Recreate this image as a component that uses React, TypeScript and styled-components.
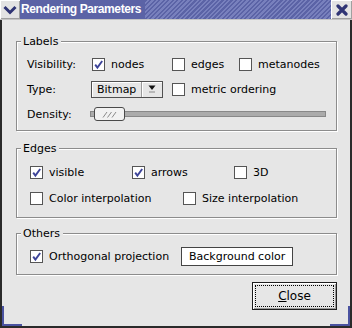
import React from 'react';
import styled, { createGlobalStyle } from 'styled-components';

const GlobalStyle = createGlobalStyle`
  html, body {
    margin: 0;
    padding: 0;
    background: #e6e6e6;
  }
  body {
    font-family: 'DejaVu Sans', 'Bitstream Vera Sans', sans-serif;
    font-size: 11px;
    color: #000;
  }
`;

const NAVY = '#2f3474';

const Check: React.FC<{ checked?: boolean; label: string; span?: number }> = ({ checked, label, span }) => (
  <CheckItem $span={span}>
    <CheckBox>
      {checked && (
        <svg width="11" height="11" viewBox="0 0 11 11">
          <path d="M2.2 5.6 L4.4 8.6 L9.2 2" fill="none" stroke="#3d4499" strokeWidth="1.9" />
        </svg>
      )}
    </CheckBox>
    <span>{label}</span>
  </CheckItem>
);

const App: React.FC = () => {
  return (
    <Window>
      <GlobalStyle />
      <TitleBar>
        <TitleButton $width={20}>
          <svg width="14" height="10" viewBox="0 0 14 10">
            <polyline points="1.5,2 7,7.5 12.5,2" fill="none" stroke={NAVY} strokeWidth="3" />
          </svg>
        </TitleButton>
        <TitleText>Rendering Parameters</TitleText>
        <Stripes />
        <TitleButton $width={21}>
          <svg width="12" height="12" viewBox="0 0 12 12">
            <path d="M2 2 L10 10 M10 2 L2 10" stroke={NAVY} strokeWidth="3.2" strokeLinecap="round" />
          </svg>
        </TitleButton>
      </TitleBar>

      <Body>
        <Frame>
          <Legend>Labels</Legend>
          <LabelsGrid>
            <RowLabel>Visibility:</RowLabel>
            <Check checked label="nodes" />
            <Check label="edges" />
            <Check label="metanodes" />

            <RowLabel>Type:</RowLabel>
            <Combo>
              <ComboText>Bitmap</ComboText>
              <ComboArrow>
                <svg width="8" height="8" viewBox="0 0 8 8">
                  <path d="M0.5 0.5 L7.5 0.5 L4 5 Z" fill="#111" />
                  <rect x="1" y="6.5" width="6" height="1" fill="#8a8a8a" />
                </svg>
              </ComboArrow>
            </Combo>
            <Check label="metric ordering" span={2} />

            <RowLabel>Density:</RowLabel>
            <Slider>
              <Track />
              <Thumb>
                <svg width="29" height="12" viewBox="0 0 29 12">
                  <path d="M8 9.5 L12 4 M12.5 9.5 L16.5 4 M17 9.5 L21 4" stroke="#8a8a8a" strokeWidth="1" />
                </svg>
              </Thumb>
            </Slider>
          </LabelsGrid>
        </Frame>

        <Frame $mt={11}>
          <Legend>Edges</Legend>
          <EdgesGrid>
            <Check checked label="visible" span={2} />
            <Check checked label="arrows" span={2} />
            <Check label="3D" span={2} />
            <Check label="Color interpolation" span={3} />
            <Check label="Size interpolation" span={3} />
          </EdgesGrid>
        </Frame>

        <Frame $mt={9}>
          <Legend>Others</Legend>
          <OthersRow>
            <Check checked label="Orthogonal projection" />
            <PlainButton>Background color</PlainButton>
          </OthersRow>
        </Frame>

        <Footer>
          <CloseButton>
            <FocusRing>
              <u>C</u>lose
            </FocusRing>
          </CloseButton>
        </Footer>
      </Body>

      <Corner $side="left" />
      <Corner $side="right" />
    </Window>
  );
};

export default App;

const Window = styled.div`
  position: relative;
  width: 352px;
  height: 328px;
  display: flex;
  flex-direction: column;
  background: #e6e6e6;
  overflow: hidden;
`;

const TitleBar = styled.div`
  display: flex;
  height: 19px;
  flex-shrink: 0;
  background: #5b63a6;
  border-bottom: 1px solid #c4c4c4;
`;

const TitleButton = styled.div<{ $width: number }>`
  width: ${p => p.$width}px;
  display: flex;
  align-items: center;
  justify-content: center;
  background: #e3e3e3;
  box-shadow: inset 1px 1px 0 #fff, inset -1px -1px 0 #a0a0a0;
`;

const TitleText = styled.div`
  padding: 0 4px 0 1px;
  color: #fff;
  font-family: 'Liberation Sans', Arial, sans-serif;
  font-weight: bold;
  font-size: 12px;
  letter-spacing: -0.4px;
  line-height: 19px;
  white-space: nowrap;
`;

const Stripes = styled.div`
  flex: 1;
  background: repeating-linear-gradient(135deg, #5b63a6 0 1.6px, #7880bd 1.6px 3.2px);
`;

const Body = styled.div`
  flex: 1;
  display: flex;
  flex-direction: column;
  padding: 15px 13px 0 14px;
  border: 2px solid #2a2a2a;
  border-top: none;
`;

const Frame = styled.fieldset<{ $mt?: number }>`
  margin: ${p => p.$mt || 0}px 0 0 0;
  padding: 0;
  min-width: 0;
  border: 1px solid #8c8c8c;
  box-shadow: inset 1px 1px 0 #fff, 1px 1px 0 #fff;
`;

const Legend = styled.legend`
  margin-left: 4px;
  padding: 0 3px 0 2px;
  line-height: 13px;
  background: #e6e6e6;
`;

const LabelsGrid = styled.div`
  display: grid;
  grid-template-columns: 65px 80px 67px 1fr;
  grid-auto-rows: 20px;
  row-gap: 5px;
  align-items: center;
  padding: 6px 0 6px 10px;
`;

const EdgesGrid = styled.div`
  display: grid;
  grid-template-columns: repeat(6, 51px);
  grid-auto-rows: 20px;
  row-gap: 6px;
  align-items: center;
  padding: 7px 0 9px 13px;
`;

const OthersRow = styled.div`
  display: grid;
  grid-template-columns: 151px auto;
  grid-auto-rows: 20px;
  align-items: center;
  justify-items: start;
  padding: 6px 0 8px 13px;
`;

const RowLabel = styled.span`
  white-space: nowrap;
`;

const CheckItem = styled.label<{ $span?: number }>`
  display: flex;
  align-items: center;
  gap: 6px;
  white-space: nowrap;
  grid-column: span ${p => p.$span || 1};
`;

const CheckBox = styled.span`
  width: 13px;
  height: 13px;
  box-sizing: border-box;
  flex-shrink: 0;
  display: flex;
  align-items: center;
  justify-content: center;
  border: 1px solid #555;
  background: #fff;
`;

const Combo = styled.div`
  width: 72px;
  height: 17px;
  box-sizing: border-box;
  margin-left: -1px;
  display: flex;
  border: 1px solid #505050;
  background: #e6e6e6;
  box-shadow: inset 1px 1px 0 #fff;
`;

const ComboText = styled.span`
  flex: 1;
  padding-left: 5px;
  line-height: 15px;
`;

const ComboArrow = styled.span`
  width: 20px;
  display: flex;
  align-items: center;
  justify-content: center;
  border-left: 1px solid #9a9a9a;
  box-shadow: inset 1px 0 0 #fff;
`;

const Slider = styled.div`
  position: relative;
  grid-column: 2 / 5;
  width: 236px;
  height: 14px;
  margin-left: -2px;
  display: flex;
  align-items: center;
`;

const Track = styled.div`
  flex: 1;
  height: 6px;
  box-sizing: border-box;
  background: #ababab;
  border: 1px solid #888;
`;

const Thumb = styled.div`
  position: absolute;
  left: 4px;
  top: 0;
  width: 31px;
  height: 14px;
  box-sizing: border-box;
  border: 1px solid #4a4a4a;
  border-radius: 3px;
  background: #f2f2f2;
  display: flex;
`;

const PlainButton = styled.button`
  height: 19px;
  padding: 0 7px;
  border: 1px solid #444;
  background: #fff;
  font-family: inherit;
  font-size: 11px;
  color: #000;
`;

const Footer = styled.div`
  display: flex;
  justify-content: flex-end;
  margin-top: 7px;
`;

const CloseButton = styled.button`
  width: 85px;
  height: 28px;
  padding: 2px;
  border: 1px solid #1e1e1e;
  background: #e6e6e6;
  box-shadow: inset 1px 1px 0 #fff, inset -1px -1px 0 #9a9a9a;
  font-family: inherit;
  font-size: 12px;
  color: #000;
`;

const FocusRing = styled.span`
  display: flex;
  align-items: center;
  justify-content: center;
  height: 100%;
  box-sizing: border-box;
  border: 1px dotted #000;
`;

const Corner = styled.div<{ $side: 'left' | 'right' }>`
  position: absolute;
  bottom: 2px;
  ${p => p.$side}: 2px;
  width: 20px;
  height: 20px;
  box-sizing: border-box;
  border-bottom: 2px solid #4a52a0;
  border-${p => p.$side}: 2px solid #4a52a0;
`;
